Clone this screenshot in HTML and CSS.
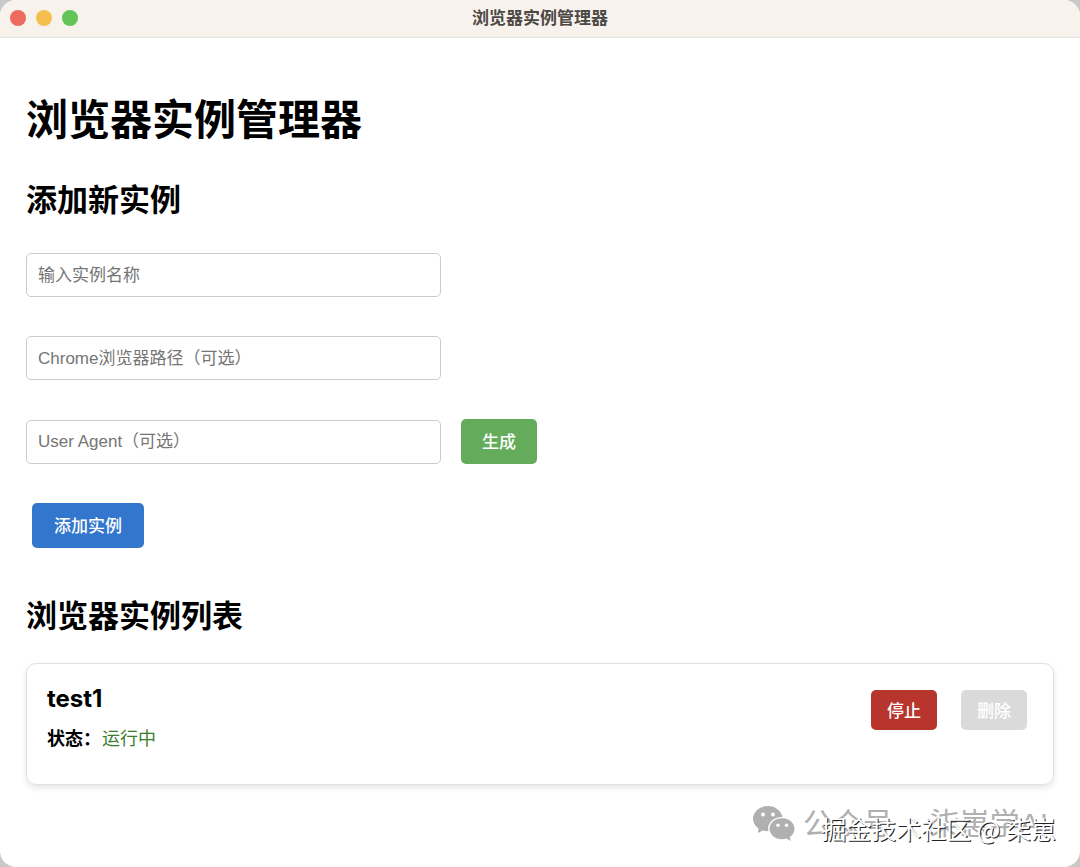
FILE: index.html
```html
<!DOCTYPE html>
<html lang="zh-CN">
<head>
<meta charset="utf-8">
<meta name="viewport" content="width=device-width, initial-scale=1">
<title>浏览器实例管理器</title>
<link rel="stylesheet" href="styles.css">
</head>
<body>
<div class="window">
  <header class="titlebar">
    <div class="lights">
      <button class="light light-close" type="button" aria-label="关闭"></button>
      <button class="light light-min" type="button" aria-label="最小化"></button>
      <button class="light light-max" type="button" aria-label="最大化"></button>
    </div>
    <span class="titlebar-text">浏览器实例管理器</span>
  </header>
  <main class="content">
    <h1 class="page-title">浏览器实例管理器</h1>
    <h2 class="section-title">添加新实例</h2>
    <form class="form">
      <div class="row"><input class="field" type="text" placeholder="输入实例名称" aria-label="输入实例名称"></div>
      <div class="row"><input class="field" type="text" placeholder="Chrome浏览器路径（可选）" aria-label="Chrome浏览器路径（可选）"></div>
      <div class="row">
        <input class="field" type="text" placeholder="User Agent（可选）" aria-label="User Agent（可选）">
        <button class="btn btn-green" type="button">生成</button>
      </div>
      <div class="row row-submit"><button class="btn btn-blue" type="button">添加实例</button></div>
    </form>
    <h2 class="section-title">浏览器实例列表</h2>
    <article class="card">
      <div class="info">
        <h3 class="name">test1</h3>
        <p class="status"><strong>状态：</strong><span class="running">运行中</span></p>
      </div>
      <div class="actions">
        <button class="btn btn-small btn-red" type="button">停止</button>
        <button class="btn btn-small btn-disabled" type="button" disabled>删除</button>
      </div>
    </article>
  </main>
  <div class="account">
    <svg class="account-icon" width="42" height="35" viewBox="0 0 42 35" aria-hidden="true">
      <path fill="#b0b0b0" d="M15 0C6.700 0 0 5.700 0 12.800c0 4 2.200 7.400 5.500 9.700L4.800 27l5-2.500c1.800.5 3.600.8 5.600.8-.2-.9-.3-1.700-.3-2.500 0-6.500 6-11.700 13.500-11.700h1C28 4.800 22 0 15 0Z"/>
      <path fill="#b0b0b0" d="M29 12.200c-7 0-12.500 4.700-12.500 10.500S22 33.200 29 33.200c1.500 0 3-.2 4.300-.6l4.500 2.400-1.100-4c3-1.900 4.800-4.900 4.800-8.300 0-5.800-5.500-10.500-12.500-10.500Z"/>
      <g fill="#fff"><circle cx="10" cy="8.500" r="2"/><circle cx="20" cy="8.500" r="2"/><circle cx="25" cy="19.300" r="1.700"/><circle cx="33.500" cy="19.300" r="1.700"/></g>
    </svg>
    <span class="account-text">公众号 <span class="dot">·</span> 柒崽学AI</span>
  </div>
  <div class="community">掘金技术社区 @ 柒崽</div>
</div>
</body>
</html>
```

FILE: styles.css
```css
* {
  box-sizing: border-box;
}

body {
  margin: 0;
  background: #c9c9c9;
  color: #000;
  font-family: Inter, "Noto Sans CJK SC", sans-serif;
}

.window {
  position: relative;
  min-height: 100vh;
  background: #fff;
  border-radius: 16px;
  overflow: hidden;
}

.titlebar {
  display: grid;
  grid-template-columns: 1fr auto 1fr;
  align-items: center;
  height: 38px;
  padding: 0 10px 2px;
  background: #f7f2ec;
  border-bottom: 1px solid #e6e3df;
}

.lights {
  display: flex;
  gap: 10px;
}

.light {
  width: 16px;
  height: 16px;
  padding: 0;
  border: 0;
  border-radius: 50%;
}

.light-close {
  background: #ec6a5e;
}

.light-min {
  background: #f4bf4f;
}

.light-max {
  background: #61c454;
}

.titlebar-text {
  color: #4b4845;
  font-size: 17px;
  font-weight: 700;
  line-height: 24px;
}

.content {
  padding: 52px 26px 82px;
}

.page-title {
  margin: 0 0 27px;
  font-size: 42px;
  font-weight: 700;
  line-height: 60px;
}

.section-title {
  margin: 0;
  font-size: 31px;
  font-weight: 700;
  line-height: 46px;
}

.form {
  display: grid;
  gap: 39px;
  margin: 30px 0 45px;
}

.row {
  display: flex;
  align-items: center;
  gap: 20px;
}

.row-submit {
  padding-left: 6px;
}

.field {
  width: 415px;
  height: 44px;
  padding: 1px 11px 0;
  border: 1px solid #ccc;
  border-radius: 5px;
  background: #fff;
  color: #000;
  font-family: "Liberation Sans", "Noto Sans CJK SC", sans-serif;
  font-size: 17px;
}

.field::placeholder {
  color: #757575;
  opacity: 1;
}

.btn {
  height: 45px;
  padding: 0 21px 2px;
  border: 0;
  border-radius: 5px;
  color: #fff;
  font-family: "Liberation Sans", "Noto Sans CJK SC", sans-serif;
  font-size: 17px;
  font-weight: 500;
}

.btn-green {
  background: #64ac5b;
}

.btn-blue {
  padding: 0 22px 2px;
  background: #3376cd;
}

.btn-red {
  background: #b8352d;
}

.btn-disabled {
  background: #dadada;
}

.btn-small {
  height: 40px;
  padding: 0 16px 2px;
}

.card {
  display: flex;
  justify-content: space-between;
  align-items: flex-start;
  min-height: 122px;
  margin-top: 24px;
  padding: 17px 26px 20px 20px;
  border: 1px solid #e0e0e0;
  border-radius: 10px;
  box-shadow: 0 3px 6px rgba(0, 0, 0, 0.1);
}

.name {
  margin: 0 0 8px;
  font-size: 24px;
  font-weight: 700;
  line-height: 36px;
}

.status {
  margin: 0;
  font-size: 18px;
  line-height: 28px;
}

.running {
  margin-left: 1px;
  color: #3a7d2c;
}

.actions {
  display: flex;
  gap: 24px;
  padding-top: 9px;
}

.account {
  position: absolute;
  right: 32px;
  bottom: 21px;
  display: flex;
  align-items: center;
  gap: 8px;
}

.account-icon {
  margin-bottom: 2px;
}

.account-text {
  color: #b0b0b0;
  font-family: "Liberation Sans", "Noto Sans CJK SC", sans-serif;
  font-size: 30px;
  font-weight: 400;
  line-height: 44px;
  white-space: nowrap;
}

.dot {
  margin: 0 5px;
}

.community {
  position: absolute;
  right: 24px;
  bottom: 20px;
  color: #fff;
  font-family: "Noto Sans CJK SC", sans-serif;
  font-size: 25px;
  line-height: 38px;
  text-shadow: 1px 1px 0 #222;
  white-space: nowrap;
}
```
